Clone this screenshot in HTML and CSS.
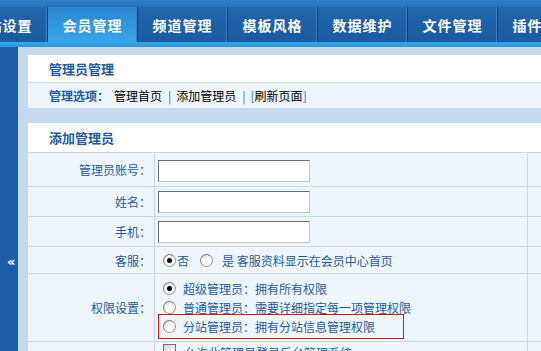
FILE: index.html
```html
<!DOCTYPE html>
<html lang="zh-CN">
<head>
<meta charset="utf-8">
<title>添加管理员</title>
<link rel="stylesheet" href="styles.css">
</head>
<body>
<div class="topband"></div>
<nav class="nav">
  <div class="tab">网站设置</div>
  <div class="tab active">会员管理</div>
  <div class="tab">频道管理</div>
  <div class="tab">模板风格</div>
  <div class="tab">数据维护</div>
  <div class="tab">文件管理</div>
  <div class="tab">插件管理</div>
</nav>
<div class="strip"></div>
<div class="main">
  <aside class="side"><span class="arrow">«</span></aside>
  <div class="content">
    <section class="panel first">
      <div class="ptitle">管理员管理</div>
      <div class="opts">
        <b class="optlabel">管理选项：</b><span>管理首页</span><span class="sep">|</span><span>添加管理员</span><span class="sep">|</span><span class="br">[</span><span>刷新页面</span><span class="br">]</span>
      </div>
    </section>
    <section class="panel">
      <div class="ptitle add">添加管理员</div>
      <div class="row r1">
        <div class="lab">管理员账号：</div>
        <div class="val"><span class="inp"></span></div>
        <div class="ext"></div>
      </div>
      <div class="row r2">
        <div class="lab">姓名：</div>
        <div class="val"><span class="inp"></span></div>
        <div class="ext"></div>
      </div>
      <div class="row r2">
        <div class="lab">手机：</div>
        <div class="val"><span class="inp"></span></div>
        <div class="ext"></div>
      </div>
      <div class="row r4">
        <div class="lab">客服：</div>
        <div class="val inline">
          <span class="radio checked"></span><span class="t1">否</span>
          <span class="radio second"></span><span class="t2">是&nbsp;客服资料显示在会员中心首页</span>
        </div>
        <div class="ext"></div>
      </div>
      <div class="row r5">
        <div class="lab">权限设置：</div>
        <div class="val stack">
          <div class="opt"><span class="radio checked"></span><span>超级管理员：拥有所有权限</span></div>
          <div class="opt"><span class="radio"></span><span>普通管理员：需要详细指定每一项管理权限</span></div>
          <div class="opt boxed"><span class="radio"></span><span>分站管理员：拥有分站信息管理权限</span></div>
        </div>
        <div class="ext"></div>
      </div>
      <div class="row r6">
        <div class="lab"></div>
        <div class="val inline top"><span class="check"></span><span class="t3">允许此管理员登录后台管理系统</span></div>
        <div class="ext"></div>
      </div>
    </section>
  </div>
</div>
</body>
</html>
```
FILE: styles.css
```css
* { box-sizing: border-box; }
html, body { margin: 0; padding: 0; }
body {
  width: 541px;
  height: 351px;
  overflow: hidden;
  font-family: "Noto Sans CJK SC", "Liberation Sans", sans-serif;
  font-size: 12px;
  color: #000;
  background: #c5d9ee;
}
.topband {
  height: 7px;
  background: linear-gradient(#2f80c8, #2572bb);
}
.nav {
  height: 35px;
  display: flex;
  margin-left: -42px;
  background: linear-gradient(#2066ae, #1b5aa0);
  overflow: hidden;
}
.tab {
  flex: 0 0 90px;
  height: 35px;
  display: flex;
  align-items: center;
  justify-content: center;
  color: #fff;
  font-weight: bold;
  font-size: 14px;
  letter-spacing: 1px;
  border-right: 1px solid #0e3e78;
  box-shadow: inset -2px 0 0 -1px #3b7fc4;
}
.tab.active {
  background: linear-gradient(#2a86d2, #3aa6ea);
}
.strip {
  height: 5px;
  background: linear-gradient(#32acee, #2595dc);
}
.main {
  display: flex;
  height: 304px;
}
.side {
  flex: 0 0 18px;
  background: #1d5ea6;
  position: relative;
}
.arrow {
  position: absolute;
  left: 7px;
  top: 208px;
  color: #fff;
  font-weight: bold;
  font-size: 13px;
  line-height: 13px;
  font-family: "DejaVu Sans", sans-serif;
}
.content {
  flex: 1;
  padding: 8px 0 0 10px;
  background: #c5d9ee;
  overflow: hidden;
}
.panel {
  background: #fff;
  width: 560px;
}
.panel.first { margin-bottom: 15px; }
.ptitle {
  height: 28px;
  padding-left: 21px;
  display: flex;
  align-items: center;
  font-size: 13px;
  font-weight: bold;
  color: #1e5a9e;
  border-bottom: 1px solid #ccd9e8;
}
.ptitle.add { height: 30px; }
.opts {
  height: 25px;
  padding-left: 21px;
  display: flex;
  align-items: center;
  background: #eef5fc;
}
.optlabel { color: #1e5a9e; margin-right: 5px; }
.sep { color: #3a6fb5; margin: 0 5px 0 6px; }
.br { color: #3a6fb5; }
.row {
  display: grid;
  grid-template-columns: 127px 373px 1fr;
  background: #eef6fc;
  border-bottom: 1px solid #c9d7e8;
}
.r1 { height: 34px; }
.r2 { height: 30px; }
.r4 { height: 27px; }
.r5 { height: 68px; }
.r6 { height: 30px; }
.lab, .val { border-right: 1px solid #c9d7e8; }
.lab {
  display: flex;
  align-items: center;
  justify-content: flex-end;
  padding-right: 3px;
  color: #1f5c9e;
}
.val {
  display: flex;
  align-items: center;
  padding-left: 3px;
  color: #1f5c9e;
}
.inp {
  display: block;
  width: 152px;
  height: 22px;
  background: #fff;
  border: 1px solid;
  border-color: #6f6f6f #c6c6c6 #c6c6c6 #6f6f6f;
}
.r1 .inp { margin-top: 3px; }
.inline { padding-left: 8px; }
.inline.top { align-items: flex-start; padding-top: 2px; }
.radio {
  flex: 0 0 13px;
  width: 13px;
  height: 13px;
  border-radius: 50%;
  border: 1px solid #9a9a9a;
  border-top-color: #808080;
  border-left-color: #808080;
  background: radial-gradient(circle at 60% 65%, #ffffff 30%, #d8d8d8 100%);
  position: relative;
  display: inline-block;
}
.radio.checked::after {
  content: "";
  position: absolute;
  left: 3px;
  top: 3px;
  width: 5px;
  height: 5px;
  border-radius: 50%;
  background: #000;
}
.t1 { margin-left: 1px; }
.radio.second { margin-left: 11px; }
.t2 { margin-left: 9px; }
.stack {
  flex-direction: column;
  align-items: flex-start;
  justify-content: flex-start;
  padding-top: 5px;
  padding-left: 8px;
}
.opt {
  height: 19px;
  display: flex;
  align-items: center;
}
.opt .radio { margin-right: 7px; }
.opt.boxed {
  height: 25px;
  width: 246px;
  margin-left: -5px;
  margin-top: -3px;
  padding-left: 4px;
  border: 1px solid #e01010;
}
.check {
  display: inline-block;
  width: 13px;
  height: 13px;
  border: 1px solid #6f6f6f;
  background: linear-gradient(135deg, #d8d8d8, #fff);
  margin-right: 8px;
}
.ext { }
```
